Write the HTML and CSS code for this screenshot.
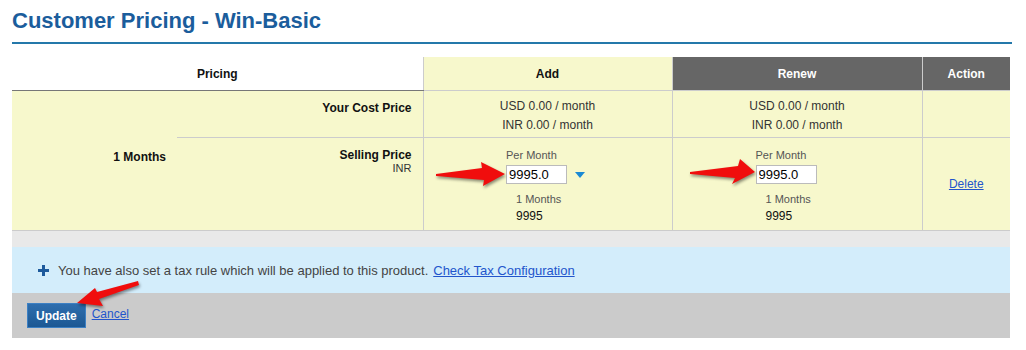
FILE: index.html
```html
<!DOCTYPE html>
<html lang="en">
<head>
    <meta charset="UTF-8">
    <title>Customer Pricing - Win-Basic</title>
    <link rel="stylesheet" href="styles.css">
</head>
<body>
    <div class="page">
        <h1>Customer Pricing - Win-Basic</h1>

        <table class="pricing">
            <colgroup>
                <col class="w-tenure">
                <col class="w-label">
                <col class="w-add">
                <col class="w-renew">
                <col class="w-action">
            </colgroup>
            <thead>
                <tr>
                    <th colspan="2" class="th-pricing">Pricing</th>
                    <th class="th-add">Add</th>
                    <th class="th-dark">Renew</th>
                    <th class="th-dark">Action</th>
                </tr>
            </thead>
            <tbody>
                <tr class="row-cost">
                    <td rowspan="2" class="tenure">1 Months</td>
                    <td class="label">Your Cost Price</td>
                    <td class="cost">USD 0.00 / month<br>INR 0.00 / month</td>
                    <td class="cost">USD 0.00 / month<br>INR 0.00 / month</td>
                    <td></td>
                </tr>
                <tr class="row-sell">
                    <td class="label">Selling Price<span class="currency">INR</span></td>
                    <td class="sell">
                        <div class="sell-box">
                            <div class="per">Per Month</div>
                            <div class="input-row">
                                <input type="text" value="9995.0">
                                <span class="caret"></span>
                            </div>
                            <div class="months">1 Months</div>
                            <div class="total">9995</div>
                        </div>
                    </td>
                    <td class="sell">
                        <div class="sell-box">
                            <div class="per">Per Month</div>
                            <div class="input-row">
                                <input type="text" value="9995.0">
                                <span class="caret hidden"></span>
                            </div>
                            <div class="months">1 Months</div>
                            <div class="total">9995</div>
                        </div>
                    </td>
                    <td class="action"><a href="#">Delete</a></td>
                </tr>
            </tbody>
        </table>

        <div class="spacer"></div>

        <div class="tax-note">
            <svg class="plus" width="11" height="11" viewBox="0 0 11 11">
                <rect x="4" y="0" width="3" height="11" fill="#1d5a9c"/>
                <rect x="0" y="4" width="11" height="3" fill="#1d5a9c"/>
            </svg>
            <span>You have also set a tax rule which will be applied to this product.</span>
            <a href="#">Check Tax Configuration</a>
        </div>

        <div class="actions">
            <button type="button" class="btn-update">Update</button>
            <a href="#" class="cancel">Cancel</a>
        </div>
    </div>

    <!-- annotation arrows -->
    <svg class="arrows" width="1026" height="350" viewBox="0 0 1026 350">
        <polygon points="436,174 482,168 481,162 505,174 483,186 484,180 436,176"/>
        <polygon points="690,172 738,166 740,159 755,172 732,184 735,178 690,174"/>
        <polygon points="138,281 97,292 95,288 77,303 103,306 99,299 139,285"/>
    </svg>
</body>
</html>
```

FILE: styles.css
```css
body {
    margin: 0;
    font-family: Arial, "Liberation Sans", sans-serif;
    font-size: 12px;
    color: #333;
    position: relative;
}
.page {
    width: 1000px;
    padding: 8px 0 0 12px;
}
h1 {
    margin: 0;
    font-size: 22px;
    line-height: 26px;
    color: #1b5d9c;
    padding-bottom: 8px;
    border-bottom: 2px solid #2478aa;
}

/* pricing table */
.pricing {
    width: 998px;
    margin-top: 13px;
    border-collapse: collapse;
    table-layout: fixed;
    background: #f7f8cc;
}
.w-tenure { width: 165px; }
.w-label { width: 246px; }
.w-add { width: 249px; }
.w-renew { width: 250px; }
.w-action { width: 88px; }

.pricing th {
    height: 33px;
    padding: 0;
    font-size: 12px;
    color: #111;
    border-left: 1px solid #ccc;
}
.pricing .th-pricing {
    background: #fff;
    border-left: none;
    border-bottom: 1px solid #777;
}
.pricing .th-add {
    border-bottom: 1px solid #ccc;
}
.pricing .th-dark {
    background: #666;
    color: #fff;
}
.pricing td {
    padding: 0;
    border-left: 1px solid #ccc;
    border-top: 1px solid #ccc;
}
.pricing td.tenure {
    border-left: none;
    border-top: none;
    border-bottom: 1px solid #ccc;
    text-align: right;
    font-weight: bold;
    color: #111;
    padding: 0 11px 8px 0;
}
.row-cost {
    height: 47px;
}
.row-sell {
    height: 93px;
}
.pricing td.label {
    border-left: none;
    vertical-align: top;
    text-align: right;
    padding: 10px 11px 0 0;
    font-weight: bold;
    color: #111;
}
.currency {
    display: block;
    font-weight: normal;
    font-size: 11px;
    color: #333;
    line-height: 13px;
}
.pricing td.cost {
    text-align: center;
    line-height: 19px;
    padding-top: 4px;
}
.row-sell td {
    border-bottom: 1px solid #ccc;
}
.pricing td.sell {
    text-align: center;
    vertical-align: top;
    padding-top: 10px;
}
.sell-box {
    display: inline-block;
    width: 83px;
    text-align: left;
}
.per {
    font-size: 11px;
    color: #555;
    line-height: 14px;
}
.input-row {
    display: flex;
    align-items: center;
    margin-top: 3px;
}
.input-row input {
    width: 61px;
    height: 19px;
    box-sizing: border-box;
    border: 1px solid #bbb;
    padding: 0 2px;
    font-family: Arial, "Liberation Sans", sans-serif;
    font-size: 13px;
    color: #000;
    background: #fff;
}
.caret {
    margin-left: 8px;
    width: 0;
    height: 0;
    border-left: 5px solid transparent;
    border-right: 5px solid transparent;
    border-top: 6px solid #1a8ad4;
}
.caret.hidden {
    visibility: hidden;
}
.months {
    margin-top: 8px;
    padding-left: 10px;
    font-size: 11px;
    color: #555;
    line-height: 14px;
}
.total {
    margin-top: 3px;
    padding-left: 10px;
    color: #111;
    line-height: 14px;
}
.action {
    text-align: center;
}
.action a {
    color: #2255cc;
}

/* bands under the table */
.spacer {
    width: 998px;
    height: 16px;
    background: #e9e9e9;
}
.tax-note {
    width: 972px;
    height: 46px;
    padding-left: 26px;
    background: #d3edfb;
    display: flex;
    align-items: center;
    font-size: 13px;
    color: #444;
}
.plus {
    margin-right: 9px;
}
.tax-note a {
    margin-left: 5px;
    color: #2255cc;
}
.actions {
    width: 983px;
    height: 45px;
    padding-left: 15px;
    background: #cbcbcb;
    display: flex;
    align-items: center;
}
.btn-update {
    height: 25px;
    padding: 0 8px;
    border: 1px solid #3c80c4;
    background: linear-gradient(#2e6eae, #1c5893);
    color: #fff;
    font-family: Arial, "Liberation Sans", sans-serif;
    font-size: 12px;
    font-weight: bold;
    cursor: pointer;
}
.cancel {
    margin-left: 6px;
    color: #2255cc;
    font-size: 12px;
    margin-top: -4px;
}

.arrows {
    position: absolute;
    top: 0;
    left: 0;
    pointer-events: none;
    fill: #f00d0d;
    filter: drop-shadow(1px 2px 1.5px rgba(0, 0, 0, 0.45));
}
```
